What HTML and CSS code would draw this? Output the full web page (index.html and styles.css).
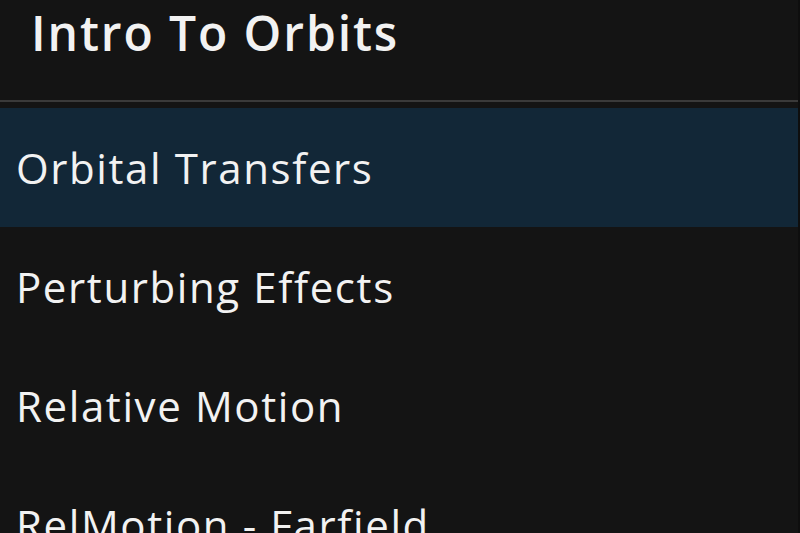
FILE: index.html
```html
<!DOCTYPE html>
<html lang="en">
<head>
    <meta charset="UTF-8">
    <meta name="viewport" content="width=device-width, initial-scale=1.0">
    <title>Intro To Orbits</title>
    <link rel="stylesheet" href="styles.css">
</head>
<body>
    <div class="panel">
        <div class="panel-header">
            <h1>Intro To Orbits</h1>
        </div>
        <div class="divider"></div>
        <ul class="lesson-list">
            <li class="lesson selected">Orbital Transfers</li>
            <li class="lesson">Perturbing Effects</li>
            <li class="lesson">Relative Motion</li>
            <li class="lesson">RelMotion - Farfield</li>
        </ul>
    </div>
</body>
</html>
```

FILE: styles.css
```css
html, body {
    margin: 0;
    height: 100%;
    overflow: hidden;
}
body {
    font-family: "Open Sans", "Noto Sans", sans-serif;
    background-color: #141414;
    color: #f2f2f2;
}
.panel {
    width: 798px;
    height: 100%;
    border-right: 2px solid #0e0e0e;
}
.panel-header {
    height: 100px;
    padding-left: 31px;
    box-sizing: border-box;
}
.panel-header h1 {
    margin: 0;
    padding-top: 9px;
    font-size: 48px;
    font-weight: 600;
    line-height: 48px;
    letter-spacing: 1.9px;
}
.divider {
    height: 2px;
    background-color: #3a3a3a;
    margin-bottom: 6px;
}
.lesson-list {
    list-style: none;
    margin: 0;
    padding: 0;
}
.lesson {
    height: 119px;
    display: flex;
    align-items: center;
    padding-left: 16px;
    font-size: 42px;
    font-weight: 500;
    letter-spacing: 1.6px;
    white-space: nowrap;
}
.lesson.selected {
    background-color: #122737;
}
```
